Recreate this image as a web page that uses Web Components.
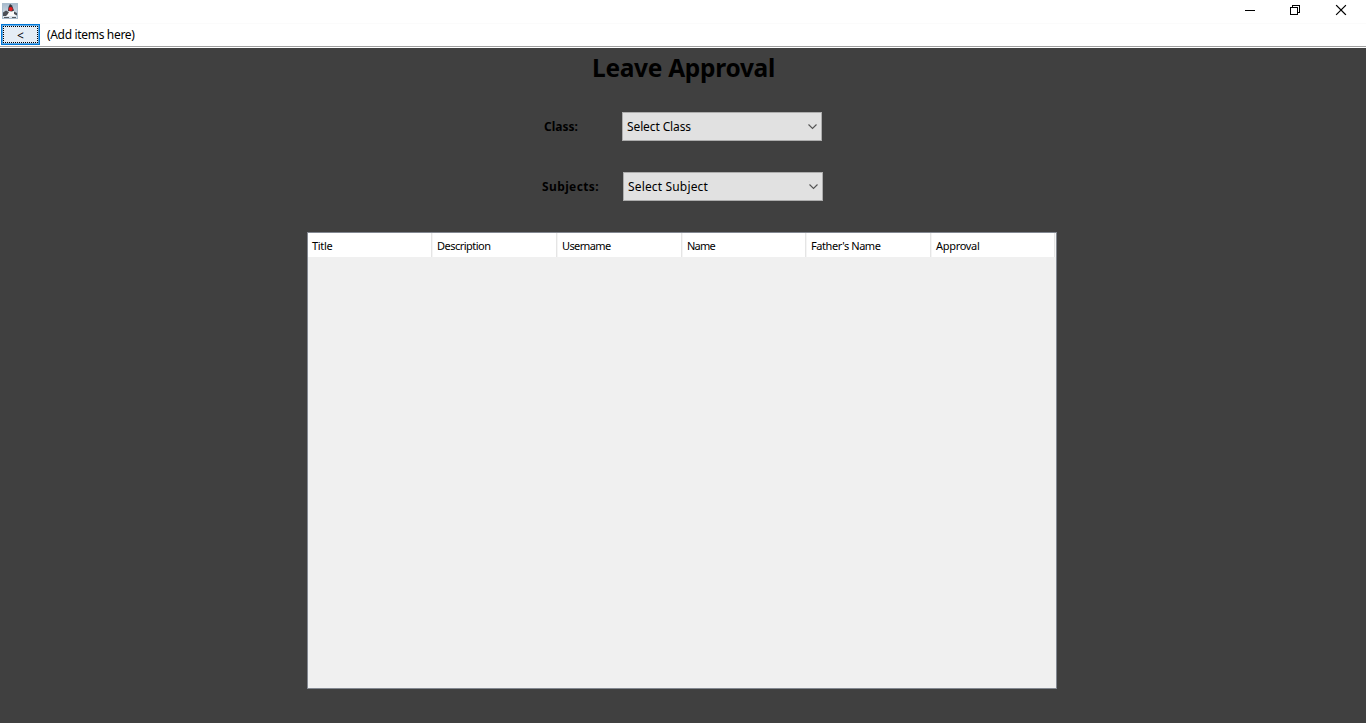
<!DOCTYPE html>
<html lang="en"><head><meta charset="utf-8"><title>Leave Approval</title>
<style>html,body{margin:0;height:100%;overflow:hidden;background:#404040}</style></head>
<body><leave-window></leave-window>
<script>
const define = (name, html, ready) => {
  const t = document.createElement('template');
  t.innerHTML = html;
  customElements.define(name, class extends HTMLElement {
    connectedCallback() {
      if (this.shadowRoot) return;
      this.attachShadow({mode: 'open'}).append(t.content.cloneNode(true));
      if (ready) ready(this, this.shadowRoot);
    }
  });
};

// A one-line label whose tracking is adjusted to reach the given width.
define('ui-text', `<style>:host{display:block;white-space:pre;color:#000}span{display:inline-block}</style><span><slot></slot></span>`,
  (el, root) => {
    const s = root.querySelector('span'), w = +el.getAttribute('w');
    if (w) s.style.letterSpacing = (w - s.getBoundingClientRect().width) / el.textContent.length + 'px';
  });

define('title-bar', `<style>
:host{display:flex;justify-content:space-between;height:23px;box-sizing:border-box;background:#fff;padding:3px 0 0 2px}
.controls{display:flex}svg{display:block}
</style>
<svg width="16" height="16" viewBox="0 0 16 16">
<defs><linearGradient id="g" x2="0" y2="1"><stop stop-color="#a3b7ca"/><stop offset="1" stop-color="#e3eaf0"/></linearGradient></defs>
<rect width="16" height="16" fill="url(#g)"/><rect x=".5" y=".5" width="15" height="15" fill="none" stroke="#a9bccc"/>
<path d="M3.500 13 5 8h7l2 5z" fill="#fafafa"/><path d="M8 1 10 2.500 12 7.500 10 8.500 6 8 6.500 4z" fill="#34353c"/>
<path d="M1 9.500 4 7.500l3 1.500-1.500 2.500L4 13H1zM12 8.500l3 1.500v2.500l-3-1.500z" fill="#4b5057"/><path d="M2 14.500h5M10 14.500h4" stroke="#555b62"/><circle cx="8.700" cy="6" r="2.100" fill="#e51c20"/>
</svg>
<div class="controls"><svg width="139" height="16" viewBox="1227 3 139 16" fill="none" stroke="#000" shape-rendering="crispEdges">
<path d="M1245 10.5h10M1290.5 7.5h7v7h-7zM1292.5 7V5.500h7v7H1298"/><path d="M1336.500 5.500l9 9M1345.500 5.500l-9 9" shape-rendering="auto" stroke-width="1.15" stroke-linecap="square"/></svg></div>`);

define('menu-bar', `<style>
:host{display:flex;height:25px;box-sizing:border-box;background:#fff;border-top:1px solid #fbfbfb;border-bottom:1px solid #fff;box-shadow:inset 0 -1px #a0a0a0;padding-left:1px;font:12px "Noto Sans",sans-serif}
button{box-sizing:border-box;width:39px;height:21px;margin:0 7px 0 0;padding:1px;border:1px solid #0078d7;box-shadow:inset 0 0 0 1px #64abe5;background:#e5edf5;font:inherit;display:block}
.focus{box-sizing:border-box;display:block;height:17px;border:1px dotted #000;line-height:17px;text-align:center;margin:0}
ui-text{line-height:21px}
</style><button><span class="focus">&lt;</span></button><ui-text w="87.500">(Add items here)</ui-text>`);

define('select-box', `<style>
:host{display:flex;box-sizing:border-box;width:200px;height:29px;border:1px solid #adadad;background:#e1e1e1;justify-content:space-between;align-items:center;padding:0 3px 0 4px;font:12px/27px "Noto Sans",sans-serif}
svg{display:block}</style><slot></slot><svg width="11" height="7" viewBox="0 0 11 7" fill="none" stroke="#555" stroke-width="1.1"><path d="M1.500 1.500l4 4 4-4"/></svg>`);

define('form-row', `<style>:host{display:flex;height:29px;font:bold 12px/29px "Noto Sans",sans-serif}</style><slot></slot>`);

define('data-table', `<style>
:host{display:block;box-sizing:border-box;width:750px;height:457px;border:1px solid #828790;background:#f0f0f0}
header{display:grid;grid-template-columns:125px 125px 125px 124px 125px 124px;height:24px;font:11px/25px "Noto Sans",sans-serif;background:#fff}
ui-text{height:24px;padding-left:4px;box-shadow:inset -1px 0 #f5f5f5,inset -2px 0 #e5e5e5}
</style><header><ui-text w="20.500">Title</ui-text><ui-text w="53.500">Description</ui-text><ui-text w="48.500">Username</ui-text><ui-text w="28">Name</ui-text><ui-text w="69.500">Father's Name</ui-text><ui-text w="43.500">Approval</ui-text></header>`);

define('leave-window', `<style>
:host{display:flex;flex-direction:column;height:100vh;background:#404040}
main{display:flex;flex-direction:column}
h1{margin:4px 0 0 592px;font:bold 24.500px/32px "Noto Sans",sans-serif;height:32px}
.a{margin:28px 0 0 544px}.b{margin:31px 0 0 542px}
.a>ui-text{width:78px}.b>ui-text{width:81px}
data-table{margin:31px 0 0 307px}
</style><title-bar></title-bar><menu-bar></menu-bar><main>
<h1><ui-text w="183">Leave Approval</ui-text></h1>
<form-row class="a"><ui-text w="34">Class:</ui-text><select-box><ui-text w="64">Select Class</ui-text></select-box></form-row>
<form-row class="b"><ui-text w="57">Subjects:</ui-text><select-box><ui-text w="80">Select Subject</ui-text></select-box></form-row>
<data-table></data-table></main>`);
</script></body></html>
